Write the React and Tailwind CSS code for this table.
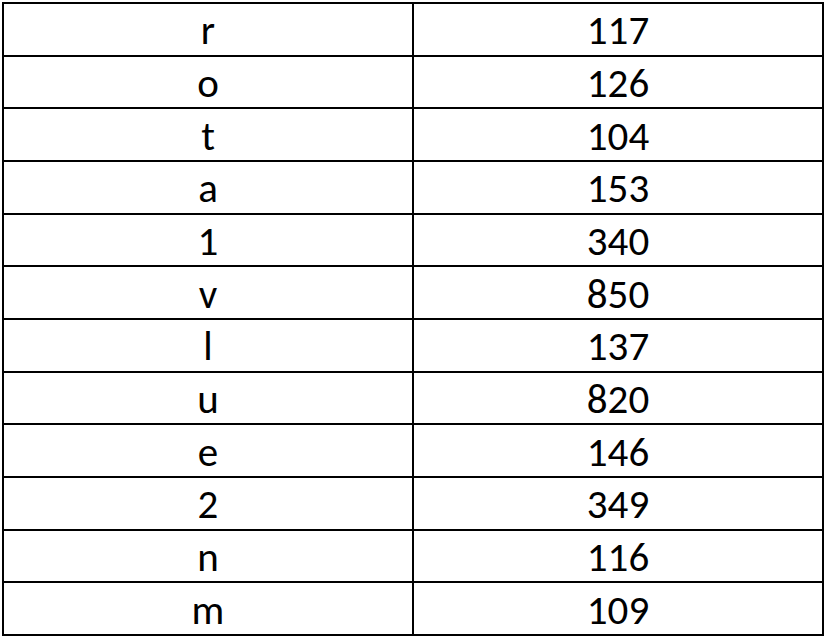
export default function App() {
  const rows = [
    ["r", "117"], ["o", "126"], ["t", "104"], ["a", "153"], ["1", "340"], ["v", "850"],
    ["l", "137"], ["u", "820"], ["e", "146"], ["2", "349"], ["n", "116"], ["m", "109"],
  ];
  return (
    <div className="w-[828px] h-[638px] bg-white pt-[2px] pl-[2px]">
      <div
        className="w-[822px] h-[634px] grid grid-cols-2 grid-rows-12 border-t-[2px] border-l-[2px] border-black text-black text-[41px]"
        style={{ fontFamily: "Carlito, Calibri, Lato, sans-serif" }}
      >
        {rows.map(([a, b], i) => (
          [
            <div key={i + "a"} className="border-r-[2px] border-b-[2px] border-black flex items-center justify-center leading-none pt-[3px]">{a}</div>,
            <div key={i + "b"} className="border-r-[2px] border-b-[2px] border-black flex items-center justify-center leading-none pt-[3px]">{b}</div>,
          ]
        ))}
      </div>
    </div>
  );
}
